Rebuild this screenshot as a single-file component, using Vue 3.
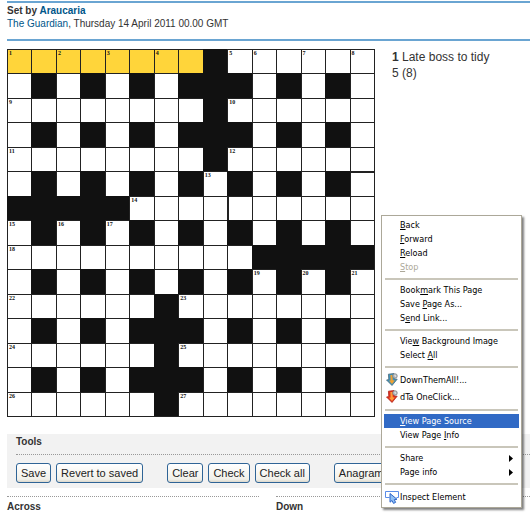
<script setup>
const layout = [
  '********#......',
  '.#.#.#.###.#.#.',
  '........#......',
  '.#.#.#.###.#.#.',
  '........#......',
  '.#.#.#.#.#.#.#.',
  '#####..........',
  '.#.#.#.#.#.#.#.',
  '..........#####',
  '.#.#.#.#.#.#.#.',
  '......#........',
  '.#.#.###.#.#.#.',
  '......#........',
  '.#.#.###.#.#.#.',
  '......#........',
]
const numbers = {
  '0-0': 1, '0-2': 2, '0-4': 3, '0-6': 4, '0-9': 5, '0-10': 6, '0-12': 7, '0-14': 8,
  '2-0': 9, '2-9': 10, '4-0': 11, '4-9': 12, '5-8': 13, '6-5': 14,
  '7-0': 15, '7-2': 16, '7-4': 17, '8-0': 18, '9-10': 19, '9-12': 20, '9-14': 21,
  '10-0': 22, '10-7': 23, '12-0': 24, '12-7': 25, '14-0': 26, '14-7': 27,
}
const cells = layout.flatMap((row, r) =>
  [...row].map((mark, c) => {
    const id = `${r}-${c}`
    return {
      id,
      block: mark === '#',
      number: numbers[id],
      classes: {
        active: mark === '*',
        'bar-left': id === '6-9',
        'bar-top': id === '5-14',
      },
    }
  })
)

const toolGroups = [['Save', 'Revert to saved'], ['Clear', 'Check', 'Check all'], ['Anagrams']]

// Each label is split as [before, access key, after]
const menu = [
  [
    { text: ['', 'B', 'ack'] },
    { text: ['', 'F', 'orward'] },
    { text: ['', 'R', 'eload'] },
    { text: ['', 'S', 'top'], disabled: true },
  ],
  [
    { text: ['Book', 'm', 'ark This Page'] },
    { text: ['Save ', 'P', 'age As...'] },
    { text: ['S', 'e', 'nd Link...'] },
  ],
  [{ text: ['Vie', 'w', ' Background Image'] }, { text: ['Select ', 'A', 'll'] }],
  [
    { text: ['DownThemAll!...', '', ''], icon: 'dta' },
    { text: ['dTa OneClick...', '', ''], icon: 'one' },
  ],
  [{ text: ['', 'V', 'iew Page Source'], selected: true }, { text: ['View Page ', 'I', 'nfo'] }],
  [{ text: ['Share', '', ''], sub: true }, { text: ['Page info', '', ''], sub: true }],
  [{ text: ['Inspect Element', '', ''], icon: 'inspect' }],
]
</script>

<template>
  <main class="page">
    <header class="byline">
      <p><b>Set by <a href="#">Araucaria</a></b></p>
      <p><a href="#">The Guardian</a>, Thursday 14 April 2011 00.00 GMT</p>
    </header>

    <section class="puzzle">
      <div class="grid">
        <template v-for="cell in cells" :key="cell.id">
          <div v-if="cell.block" class="cell block"></div>
          <label v-else class="cell" :class="cell.classes">
            <span v-if="cell.number" class="number">{{ cell.number }}</span>
            <input type="text" maxlength="1" :aria-label="'Square ' + cell.id" />
          </label>
        </template>
      </div>
      <p class="clue"><b>1</b> Late boss to tidy 5 (8)</p>
    </section>

    <section class="tools">
      <h2>Tools</h2>
      <div class="buttons">
        <div v-for="(group, i) in toolGroups" :key="i" class="group">
          <button v-for="name in group" :key="name" type="button" class="tool">{{ name }}</button>
        </div>
      </div>
    </section>

    <section class="clues">
      <h2>Across</h2>
      <h2>Down</h2>
    </section>

    <div class="menu" role="menu">
      <div v-for="(group, g) in menu" :key="g" class="menu-group">
        <button
          v-for="item in group"
          :key="item.text.join('')"
          type="button"
          role="menuitem"
          class="item"
          :class="{ selected: item.selected, tall: item.icon }"
          :disabled="item.disabled"
        >
          <span class="icon">
            <svg v-if="item.icon === 'inspect'" width="14" height="14" viewBox="0 0 14 14">
              <path d="M4.5 7.5H.5V1.5H13.5V7.5H11.5" fill="none" stroke="#5b8de8" />
              <path d="M5 3.5V12.2L7 10.5L8.5 13.4L10.6 12.4L9.3 9.6L12 9.3Z" fill="#8fc0f4" stroke="#2f66c9" />
            </svg>
            <svg v-else-if="item.icon" width="12" height="13" viewBox="0 0 12 13">
              <path
                d="M2.4 1.2L8 .5L8.4 6L11.2 6.2L6 12.5L.5 7L2.8 6.6Z"
                :fill="item.icon === 'dta' ? '#3e93bb' : '#e0301c'"
                :stroke="item.icon === 'dta' ? '#4b6a7c' : '#b02a20'"
                stroke-width=".8"
              />
              <path d="M4.4 2L6.4 2L6.8 7.2L8.8 7.4L6 10.9L3 7.8L4.6 7.4Z" :fill="item.icon === 'dta' ? '#f0a030' : '#ff9c38'" />
              <circle cx="9" cy="3" r="2.3" fill="#b4b8bb" stroke="#7d8286" stroke-width=".7" />
              <path d="M9 1.7V3.2H10.2" fill="none" stroke="#f2f2f2" stroke-width=".8" />
            </svg>
          </span>
          <span>{{ item.text[0] }}<u>{{ item.text[1] }}</u>{{ item.text[2] }}</span>
          <svg v-if="item.sub" class="arrow" width="4" height="7" viewBox="0 0 4 7">
            <path d="M0 0L4 3.5L0 7Z" fill="#000" />
          </svg>
        </button>
      </div>
    </div>
  </main>
</template>

<style>
body {
  background: #fff;
}
</style>

<style scoped>
.page {
  position: relative;
  padding: 1px 0 0 7px;
  font-family: 'Liberation Sans', Arial, sans-serif;
  color: #333;
}
p,
h2 {
  margin: 0;
}
a {
  color: #005689;
  text-decoration: none;
}
.byline {
  border-top: 2px solid #6aa5d2;
  border-bottom: 2px solid #6aa5d2;
  padding: 1px 0 9px;
  font-size: 10px;
  line-height: 13px;
}
.puzzle {
  display: grid;
  grid-template-columns: 368px minmax(0, 102px);
  gap: 17px;
  padding-top: 8px;
}
.grid {
  display: grid;
  grid-template-columns: repeat(15, minmax(0, 1fr));
  border-right: 1px solid #222;
  border-bottom: 1px solid #222;
}
.cell {
  position: relative;
  box-sizing: border-box;
  aspect-ratio: 1;
  border-top: 1px solid #222;
  border-left: 1px solid #222;
  background: #fff;
}
.block {
  background: #111;
  border-color: #111;
}
.active {
  background: #ffd53a;
}
.bar-left {
  border-left-width: 2px;
}
.bar-top {
  border-top-width: 2px;
}
.number {
  position: absolute;
  top: 0;
  left: 1px;
  font: bold 6px/7px 'Liberation Serif', serif;
  color: #111;
}
.cell input {
  display: block;
  box-sizing: border-box;
  width: 100%;
  height: 100%;
  padding: 0;
  border: 0;
  outline: 0;
  background: transparent;
  text-align: center;
}
.clue {
  font-size: 12px;
  line-height: 16px;
}
.tools {
  margin-top: 17px;
  padding: 0 0 5px 9px;
  background: #f2f2f2;
}
h2 {
  font-size: 10px;
  line-height: 15px;
  color: #333;
}
.tools h2 {
  padding-bottom: 5px;
  border-bottom: 1px dotted #999;
}
.buttons {
  display: flex;
  gap: 24px;
  padding-top: 8px;
}
.group {
  display: flex;
  gap: 5px;
}
.tool {
  height: 20px;
  padding: 0 4px;
  border: 1px solid #2f6496;
  border-radius: 3px;
  background: linear-gradient(#fff, #f1f0e9 85%, #dcd8cc);
  font: 11px/16px 'Liberation Sans', Arial, sans-serif;
  color: #222;
  white-space: nowrap;
}
.clues {
  display: grid;
  grid-template-columns: 252px 1fr;
  gap: 17px;
  padding-top: 8px;
}
.clues h2 {
  padding-top: 2px;
  border-top: 1px dotted #999;
}
.menu {
  position: absolute;
  top: 215px;
  left: 381px;
  width: 141px;
  box-sizing: border-box;
  padding: 2px;
  border: 1px solid #aca899;
  background: #fff;
  box-shadow: 2px 2px 2px rgba(0, 0, 0, 0.5);
}
.menu-group + .menu-group::before {
  content: '';
  display: block;
  height: 2px;
  margin: 4px 1px 3px;
  background: #c9c6ba;
}
.item {
  display: flex;
  align-items: center;
  width: 100%;
  height: 14px;
  padding: 0 6px 0 0;
  border: 0;
  background: transparent;
  font: 9px/14px 'DejaVu Sans Condensed', Tahoma, sans-serif;
  color: #000;
  text-align: left;
  white-space: nowrap;
}
.item:disabled {
  color: #aca899;
}
.tall {
  height: 17px;
}
.selected {
  background: #316ac5;
  color: #fff;
}
.icon {
  display: flex;
  justify-content: center;
  width: 16px;
}
.arrow {
  margin-left: auto;
}
</style>
